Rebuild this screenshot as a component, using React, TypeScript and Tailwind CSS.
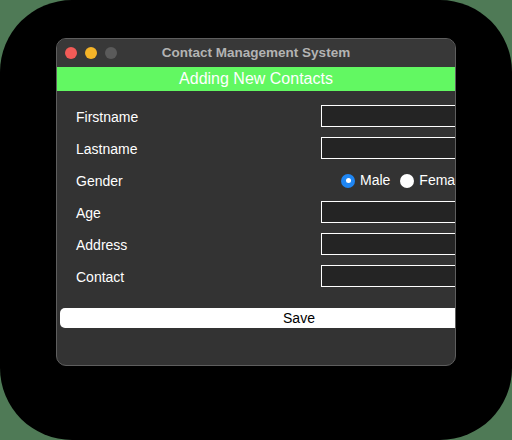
import React, { useState } from 'react';

const fields = ['Firstname', 'Lastname', 'Gender', 'Age', 'Address', 'Contact'];

export default function App() {
  const [gender, setGender] = useState('Male');

  return (
    <div className="w-[512px] h-[440px] bg-[#4f7a56] font-['Liberation_Sans',Arial,sans-serif]">
      <div className="w-full h-full bg-black rounded-[72px] pt-[38px] pl-[56px]">
        <div className="w-[400px] h-[328px] bg-[#333333] border border-[#5e5e5e] rounded-[10px] overflow-hidden flex flex-col">
          {/* title bar */}
          <div className="h-[28px] bg-[#383838] flex items-center relative shrink-0">
            <div className="flex gap-[8px] pl-[8px]">
              <span className="w-[12px] h-[12px] rounded-full bg-[#f25b57]" />
              <span className="w-[12px] h-[12px] rounded-full bg-[#f5b428]" />
              <span className="w-[12px] h-[12px] rounded-full bg-[#5a5a5a]" />
            </div>
            <div className="absolute inset-0 flex items-center justify-center text-[13.5px] font-bold text-[#b3b3b3]">
              Contact Management System
            </div>
          </div>

          {/* banner */}
          <div className="h-[24px] bg-[#62f862] flex items-center justify-center text-white text-[16px] shrink-0">
            Adding New Contacts
          </div>

          {/* form */}
          <div className="pt-[9px] flex flex-col">
            {fields.map((f) => (
              <div key={f} className="h-[32px] flex items-center">
                <span className="w-[264px] pl-[19px] pt-[2px] text-white text-[14px] shrink-0">{f}</span>
                {f === 'Gender' ? (
                  <div className="flex items-center pl-[20px] pt-[1px] text-white text-[14px] whitespace-nowrap">
                    <button onClick={() => setGender('Male')} className="flex items-center gap-[5px]">
                      <span
                        className={`w-[14px] h-[14px] rounded-full flex items-center justify-center ${
                          gender === 'Male' ? 'bg-[#1f86f3]' : 'bg-white'
                        }`}
                      >
                        {gender === 'Male' && <span className="w-[5px] h-[5px] rounded-full bg-white" />}
                      </span>
                      Male
                    </button>
                    <button onClick={() => setGender('Female')} className="flex items-center gap-[5px] ml-[10px]">
                      <span
                        className={`w-[14px] h-[14px] rounded-full flex items-center justify-center ${
                          gender === 'Female' ? 'bg-[#1f86f3]' : 'bg-white'
                        }`}
                      >
                        {gender === 'Female' && <span className="w-[5px] h-[5px] rounded-full bg-white" />}
                      </span>
                      Female
                    </button>
                  </div>
                ) : (
                  <input className="w-[200px] h-[22px] shrink-0 bg-[#242424] border border-white outline-none text-white text-[13px] px-1" />
                )}
              </div>
            ))}
          </div>

          <div className="pt-[16px] pl-[3px]">
            <button className="w-[478px] h-[20px] bg-white rounded-[5px] text-black text-[14px] flex items-center justify-center">
              Save
            </button>
          </div>
        </div>
      </div>
    </div>
  );
}
